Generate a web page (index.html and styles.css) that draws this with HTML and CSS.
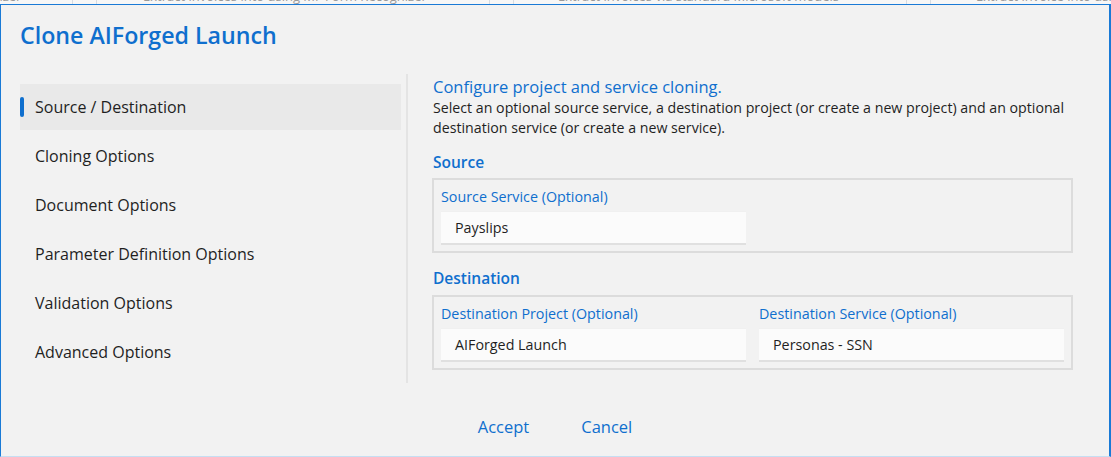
FILE: index.html
```html
<!DOCTYPE html>
<html>
<head>
<meta charset="utf-8">
<link rel="stylesheet" href="styles.css">
</head>
<body>
<div class="behind">
  <div class="cell c1"><span>Recognizer</span></div>
  <div class="cell c2"></div>
  <div class="cell c3"><span>Extract invoices into using MF Form Recognizer</span></div>
  <div class="cell c2"></div>
  <div class="cell c4"><span>Extract invoices via standard Microsoft models</span></div>
  <div class="cell c2"></div>
  <div class="cell c5"><span>Extract invoice into using custom models</span></div>
</div>
<div class="dialog">
  <h1 class="title">Clone AIForged Launch</h1>
  <div class="main">
    <nav class="nav">
      <div class="nav-item active">Source / Destination</div>
      <div class="nav-item">Cloning Options</div>
      <div class="nav-item">Document Options</div>
      <div class="nav-item">Parameter Definition Options</div>
      <div class="nav-item">Validation Options</div>
      <div class="nav-item">Advanced Options</div>
    </nav>
    <div class="divider"></div>
    <section class="content">
      <h2 class="lead">Configure project and service cloning.</h2>
      <p class="desc">Select an optional source service, a destination project (or create a new project) and an optional destination service (or create a new service).</p>
      <h3 class="section-title">Source</h3>
      <div class="group">
        <div class="field">
          <label class="field-label">Source Service (Optional)</label>
          <div class="input">Payslips</div>
        </div>
      </div>
      <h3 class="section-title dest">Destination</h3>
      <div class="group">
        <div class="field">
          <label class="field-label">Destination Project (Optional)</label>
          <div class="input">AIForged Launch</div>
        </div>
        <div class="field">
          <label class="field-label">Destination Service (Optional)</label>
          <div class="input">Personas - SSN</div>
        </div>
      </div>
    </section>
  </div>
  <div class="actions">
    <button class="btn">Accept</button>
    <button class="btn">Cancel</button>
  </div>
</div>
</body>
</html>
```
FILE: styles.css
```css
* { box-sizing: border-box; }
html, body { margin: 0; padding: 0; }
body {
  width: 1111px;
  height: 457px;
  overflow: hidden;
  background: #f3f3f3;
  font-family: "Open Sans", "Noto Sans", sans-serif;
  color: #1f1f1f;
}
.behind {
  height: 4px;
  display: flex;
  overflow: hidden;
  background: #f7f7f7;
  color: #9a9a9a;
  font-size: 13px;
}
.cell { position: relative; height: 4px; border-right: 1px solid #d7dce2; }
.cell span { position: absolute; top: -12px; left: 0; white-space: nowrap; line-height: 16px; }
.c1 { width: 73px; }
.c1 span { left: -45px; }
.c2 { width: 24px; }
.c3 { width: 393px; }
.c3 span { left: 46px; }
.c4 { width: 393px; }
.c4 span { left: 44px; }
.c5 { flex: 1; border-right: 0; }
.c5 span { left: 45px; }

.dialog {
  height: 453px;
  background: #f2f2f2;
  border-top: 1px solid #1a7ad6;
  border-left: 1px solid #1a7ad6;
  border-right: 2px solid #1a7ad6;
  border-bottom: 1px solid #c6def2;
  display: flex;
  flex-direction: column;
}
.title {
  margin: 0;
  padding: 15px 19px 0;
  font-size: 23.2px;
  line-height: 30px;
  font-weight: 600;
  color: #0f6fce;
}
.main {
  display: flex;
  margin-top: 24px;
  padding-left: 19px;
}
.nav {
  width: 381px;
  padding-top: 10px;
  display: flex;
  flex-direction: column;
  gap: 3px;
}
.nav-item {
  position: relative;
  height: 46px;
  display: flex;
  align-items: center;
  padding-left: 15px;
  font-size: 16px;
  color: #1f1f1f;
}
.nav-item.active { background: #e9e9e9; }
.nav-item.active::before {
  content: "";
  position: absolute;
  left: 0;
  top: 13px;
  width: 4px;
  height: 20px;
  border-radius: 2px;
  background: #0f6fce;
}
.divider {
  width: 2px;
  height: 309px;
  margin-left: 5px;
  background: #e4e4e4;
}
.content {
  width: 645px;
  margin-left: 25px;
  padding-top: 2px;
}
.lead {
  margin: 0;
  font-size: 16.5px;
  line-height: 22px;
  font-weight: 400;
  color: #0f6fce;
}
.desc {
  margin: 0;
  font-size: 14.2px;
  line-height: 20px;
  color: #1f1f1f;
}
.section-title {
  margin: 13px 0 5px;
  font-size: 15.5px;
  line-height: 22px;
  font-weight: 600;
  color: #0f6fce;
}
.section-title.dest { margin-top: 14px; margin-bottom: 6px; }
.group {
  width: 641px;
  margin-left: -1px;
  border: 2px solid #dcdcdc;
  padding: 7px 7px 6px;
  display: grid;
  grid-template-columns: 305px 305px;
  column-gap: 13px;
}
.field { display: flex; flex-direction: column; }
.field-label {
  font-size: 14.3px;
  line-height: 20px;
  color: #0f6fce;
  margin-bottom: 4px;
}
.input {
  height: 34px;
  background: #fbfbfb;
  border-bottom: 2px solid #e0e0e0;
  border-top: 1px solid #f0f0f0;
  display: flex;
  align-items: center;
  padding-left: 14px;
  font-size: 14.3px;
  color: #1f1f1f;
}
.actions {
  display: flex;
  justify-content: center;
  gap: 20px;
  margin-top: 27px;
}
.btn {
  background: transparent;
  border: 0;
  padding: 6px 16px;
  font-family: inherit;
  font-size: 16.5px;
  line-height: 22px;
  color: #0f6fce;
}
```
